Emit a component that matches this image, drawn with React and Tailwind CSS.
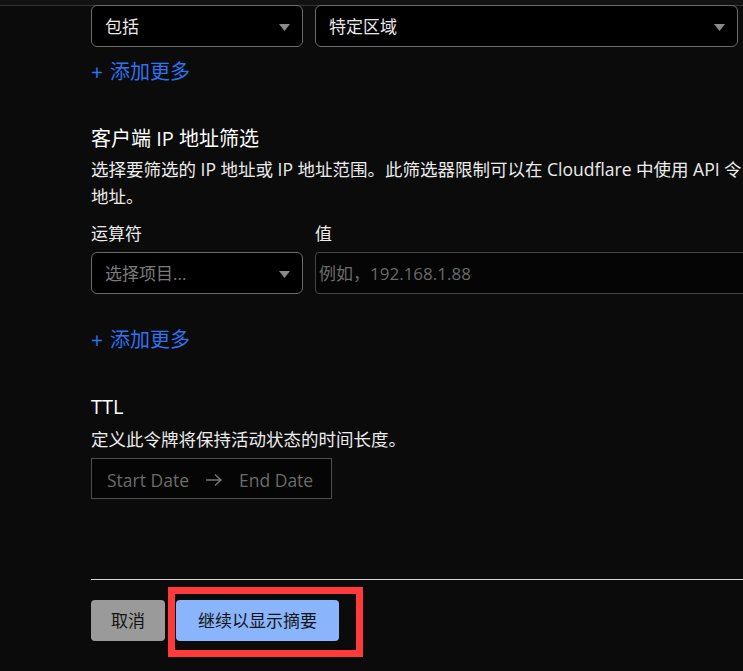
import React from "react";

const FONT = { fontFamily: "'Open Sans', 'Noto Sans CJK SC', sans-serif" };

function Caret() {
  return (
    <svg width="11" height="7" viewBox="0 0 11 7" className="shrink-0">
      <path d="M0 0 H11 L5.5 7 Z" fill="#8a8a8a" />
    </svg>
  );
}

function Select({ children, width, placeholder }) {
  return (
    <div
      className={`shrink-0 flex items-center justify-between bg-black border border-[#6a6a6a] rounded-[6px] pl-[13px] pr-[12px] pt-[2px] ${width}`}
    >
      <span className={`text-[17px] leading-[24px] ${placeholder ? "text-[#7a7a7a]" : "text-[#e8e8e8]"}`}>
        {children}
      </span>
      <Caret />
    </div>
  );
}

function AddMore({ className }) {
  return (
    <div className={`flex items-center text-[#2f72ee] h-[28px] pt-[3px] ${className}`}>
      <span className="text-[21px] leading-[28px] mr-[7px]">+</span>
      <span className="text-[20px] leading-[28px]">添加更多</span>
    </div>
  );
}

export default function App() {
  return (
    <div
      className="relative w-[743px] h-[671px] overflow-hidden bg-[#0b0b0b] text-[#ececec]"
      style={FONT}
    >
      <div className="h-[6px] bg-[#121212] border-b border-[#363636]" />

      <div className="pl-[91px] flex flex-col">
        <div className="flex gap-[12px] h-[41px] -mt-[1px]">
          <Select width="w-[212px] h-[42px]">包括</Select>
          <Select width="w-[423px] h-[42px]">特定区域</Select>
        </div>

        <AddMore className="mt-[10px]" />

        <div className="mt-[41px] text-[20px] leading-[28px] text-white">客户端 IP 地址筛选</div>
        <div className="mt-[3px] text-[17.5px] leading-[27px] text-[#ececec]">
          <div className="whitespace-nowrap">
            选择要筛选的 IP 地址或 IP 地址范围。此筛选器限制可以在 Cloudflare 中使用 API 令
          </div>
          <div className="whitespace-nowrap">地址。</div>
        </div>

        <div className="mt-[10px] flex gap-[12px] text-[17px] leading-[28px] text-[#ececec]">
          <div className="w-[212px]">运算符</div>
          <div>值</div>
        </div>

        <div className="mt-[4px] flex gap-[12px] h-[42px]">
          <Select width="w-[212px] h-[42px]" placeholder>
            选择项目...
          </Select>
          <div className="w-[460px] h-[42px] shrink-0 bg-[#050505] border border-[#454545] rounded-[4px] flex items-center pl-[3px] pt-[2px]">
            <span className="text-[17px] leading-[24px] text-[#6a6a6a]">例如，192.168.1.88</span>
          </div>
        </div>

        <AddMore className="mt-[30px]" />

        <div className="mt-[41px] text-[20px] leading-[28px] text-white">TTL</div>
        <div className="mt-[5px] text-[17.5px] leading-[27px] text-[#ececec]">定义此令牌将保持活动状态的时间长度。</div>

        <div className="mt-[5px] w-[241px] h-[41px] bg-[#050505] border border-[#4e4e4e] flex items-center pl-[15px] pt-[2px] text-[17.5px] text-[#6b6b6b]">
          <span className="leading-[24px]">Start Date</span>
          <svg width="18" height="14" viewBox="0 0 18 14" className="ml-[16px] mr-[16px]">
            <path d="M1 7 H16 M10 1.5 L16 7 L10 12.5" stroke="#777" strokeWidth="1.4" fill="none" />
          </svg>
          <span className="leading-[24px]">End Date</span>
        </div>

        <div className="mt-[80px] h-px w-[700px] bg-[#d6d6d6]" />

        <div className="mt-[20px] flex gap-[11px]">
          <button className="w-[74px] h-[41px] rounded-[4px] bg-[#9a9a9a] text-[#141414] text-[17px] leading-[24px] pt-[1px]">
            取消
          </button>
          <button className="w-[163px] h-[41px] rounded-[4px] bg-[#8ab4fb] text-[#141414] text-[17px] leading-[24px] pt-[1px]">
            继续以显示摘要
          </button>
        </div>
      </div>

      <div className="absolute left-[168px] top-[587px] w-[195px] h-[70px] border-[7px] border-[#ff3a3a] pointer-events-none" />
    </div>
  );
}
